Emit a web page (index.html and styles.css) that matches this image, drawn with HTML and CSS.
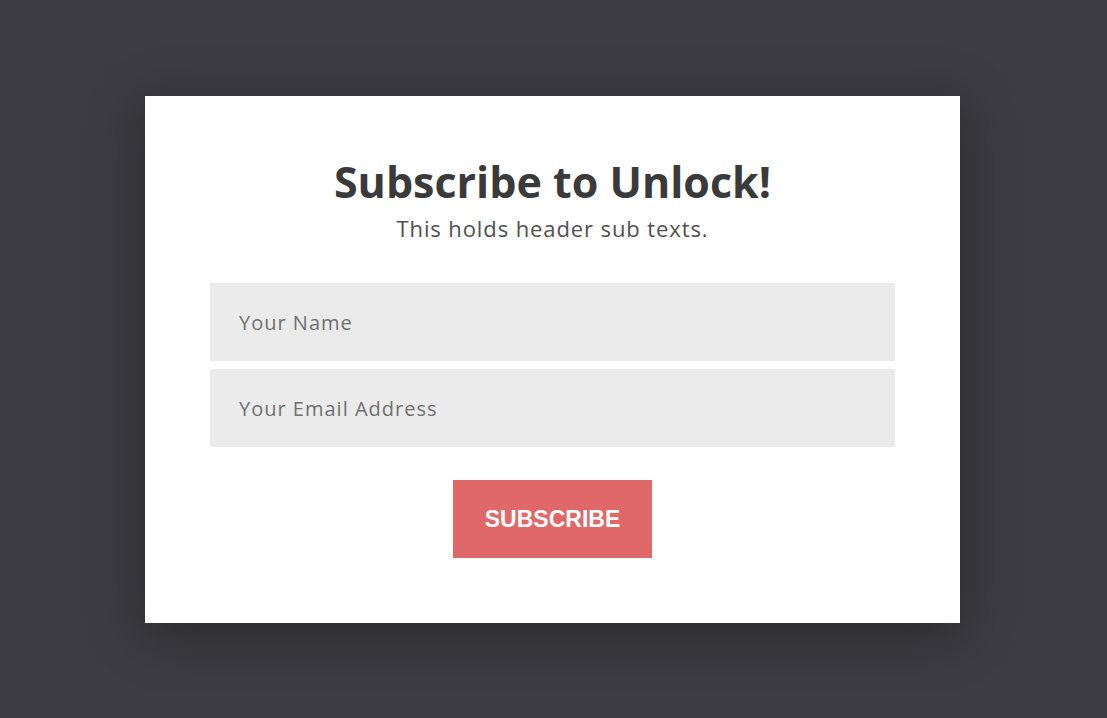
FILE: index.html
```html
<!DOCTYPE html>
<html lang="en">
<head>
  <meta charset="UTF-8">
  <title>Subscribe to Unlock</title>
  <link rel="stylesheet" href="styles.css">
</head>
<body>

  <div class="modal">
    <h2>Subscribe to Unlock!</h2>
    <p class="sub">This holds header sub texts.</p>

    <form class="form">
      <input type="text" placeholder="Your Name">
      <input type="email" placeholder="Your Email Address">
      <button type="button">SUBSCRIBE</button>
    </form>
  </div>

</body>
</html>
```

FILE: styles.css
```css
body {
  margin: 0;
  height: 718px;
  background-color: #3d3c42;
  font-family: 'Open Sans', 'Noto Sans', sans-serif;
  display: flex;
  justify-content: center;
  align-items: flex-start;
}

.modal {
  width: 815px;
  height: 527px;
  box-sizing: border-box;
  margin: 96px 2px 0 0;
  padding: 58px 65px 0;
  background-color: #fff;
  box-shadow: 0 10px 50px rgba(0, 0, 0, 0.35);
  text-align: center;
}

h2 {
  margin: 0;
  font-size: 43px;
  line-height: 56px;
  font-weight: 700;
  color: #3a3a3a;
}

.sub {
  margin: 0;
  padding-top: 2px;
  font-size: 22px;
  line-height: 32px;
  letter-spacing: 0.9px;
  color: #505050;
}

.form {
  display: flex;
  flex-direction: column;
  align-items: center;
  gap: 8px;
  margin-top: 39px;
}

.form input {
  width: 100%;
  height: 78px;
  box-sizing: border-box;
  border: none;
  padding: 0 29px;
  background-color: #ebebeb;
  font-family: inherit;
  font-size: 20px;
  letter-spacing: 1px;
  color: #333;
  outline: none;
}

.form input::placeholder {
  color: #707070;
}

.form button {
  width: 199px;
  height: 78px;
  margin-top: 25px;
  border: none;
  background-color: #e06868;
  color: #fff;
  font-family: 'Liberation Sans', Arial, sans-serif;
  font-weight: 700;
  font-size: 23px;
  cursor: pointer;
}
```
